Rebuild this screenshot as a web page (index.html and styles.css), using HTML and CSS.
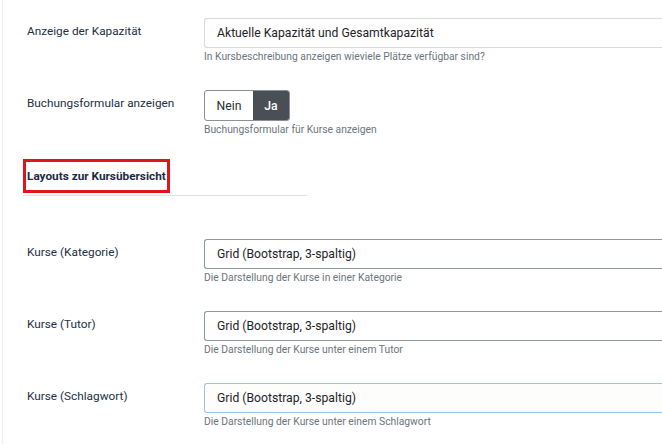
FILE: index.html
```html
<!DOCTYPE html>
<html lang="de">
<head>
<meta charset="utf-8">
<title>Kurs-Einstellungen</title>
<link rel="stylesheet" href="styles.css">
</head>
<body>
<div class="panel">
  <div class="row">
    <div class="label">Anzeige der Kapazität</div>
    <div class="control">
      <div class="select">Aktuelle Kapazität und Gesamtkapazität</div>
      <div class="help">In Kursbeschreibung anzeigen wieviele Plätze verfügbar sind?</div>
    </div>
  </div>
  <div class="row">
    <div class="label">Buchungsformular anzeigen</div>
    <div class="control">
      <div class="toggle"><span class="opt">Nein</span><span class="opt active">Ja</span></div>
      <div class="help">Buchungsformular für Kurse anzeigen</div>
    </div>
  </div>
  <div class="section">
    <h3 class="section-title">Layouts zur Kursübersicht</h3>
  </div>
  <div class="row">
    <div class="label">Kurse (Kategorie)</div>
    <div class="control">
      <div class="select green">Grid (Bootstrap, 3-spaltig)</div>
      <div class="help">Die Darstellung der Kurse in einer Kategorie</div>
    </div>
  </div>
  <div class="row">
    <div class="label">Kurse (Tutor)</div>
    <div class="control">
      <div class="select green">Grid (Bootstrap, 3-spaltig)</div>
      <div class="help">Die Darstellung der Kurse unter einem Tutor</div>
    </div>
  </div>
  <div class="row">
    <div class="label">Kurse (Schlagwort)</div>
    <div class="control">
      <div class="select focus">Grid (Bootstrap, 3-spaltig)</div>
      <div class="help">Die Darstellung der Kurse unter einem Schlagwort</div>
    </div>
  </div>
</div>
</body>
</html>
```
FILE: styles.css
```css
html, body {
  margin: 0;
  padding: 0;
  overflow: hidden;
  background: #fff;
  font-family: Roboto, "Liberation Sans", sans-serif;
}
.panel {
  margin-left: 2px;
  border-left: 1px solid #eceef0;
  padding: 18px 0 0 24px;
  height: 444px;
  box-sizing: border-box;
}
.row {
  display: grid;
  grid-template-columns: 177px 1fr;
  margin-bottom: 25px;
}
.label {
  padding-top: 3px;
  line-height: 20px;
  font-size: 11.8px;
  color: #22303f;
}
.control {
  min-width: 0;
}
.select {
  box-sizing: border-box;
  width: 100%;
  height: 30px;
  border: 1px solid #d6d9dd;
  border-right: 0;
  border-radius: 3px 0 0 3px;
  padding: 0 12px;
  line-height: 28px;
  font-size: 12.2px;
  color: #1f2328;
  background: #fff;
}
.select.green {
  border-color: #8d9c91;
}
.select.focus {
  border-color: #a3c0e6;
  background: #fdfdfb;
}
.help {
  margin-top: 1px;
  line-height: 16px;
  font-size: 10.3px;
  color: #6c757d;
}
.toggle {
  display: inline-flex;
  height: 31px;
  box-sizing: border-box;
  border: 1px solid #8a9096;
  border-radius: 3px;
  overflow: hidden;
}
.opt {
  display: flex;
  align-items: center;
  justify-content: center;
  font-size: 12.2px;
  color: #2a2f35;
  width: 48px;
}
.opt.active {
  width: 36px;
  background: #4a4f56;
  color: #fff;
  font-weight: 500;
}
.section {
  margin: -4px 0 43px -4px;
  width: 284px;
  border-bottom: 1px solid #dcdfe3;
  padding-bottom: 2px;
}
.section-title {
  display: inline-block;
  margin: 0;
  border: 3px solid #e3131b;
  padding: 4px 1px 4px 1px;
  line-height: 20px;
  font-size: 11.8px;
  font-weight: 700;
  color: #1b2a44;
}
```
